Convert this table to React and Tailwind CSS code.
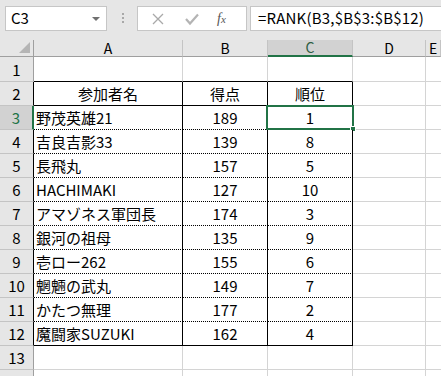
import React from 'react';

const rows = [
  ['野茂英雄21', '189', '1'],
  ['吉良吉影33', '139', '8'],
  ['長飛丸', '157', '5'],
  ['HACHIMAKI', '127', '10'],
  ['アマゾネス軍団長', '174', '3'],
  ['銀河の祖母', '135', '9'],
  ['壱ロー262', '155', '6'],
  ['魍魎の武丸', '149', '7'],
  ['かたつ無理', '177', '2'],
  ['魔闘家SUZUKI', '162', '4'],
];

const font = { fontFamily: '"Noto Sans CJK JP", "Liberation Sans", sans-serif' };

const Cell = ({ className = '', children }) => (
  <div className={`flex items-end pb-[1px] text-[15px] leading-[20px] text-black bg-white ${className}`}>
    {children}
  </div>
);

const RowHead = ({ n, selected, table, h }) => (
  <div
    className={`${h} flex items-end justify-center pb-[1px] text-[15px] leading-[20px] border-b border-[#c4c4c4] ${
      selected
        ? 'bg-[#d2d2d2] text-[#217346] border-r-2 border-r-[#217346]'
        : table
        ? 'bg-[#e6e6e6] text-black border-r border-r-black'
        : 'bg-[#e6e6e6] text-black border-r border-r-[#9f9f9f]'
    }`}
  >
    {n}
  </div>
);

const Blank = ({ h, last }) => (
  <Cell className={`${h} border-b border-[#d4d4d4] ${last ? '' : 'border-r'}`} />
);

export default function App() {
  return (
    <div className="w-[441px] h-[376px] overflow-hidden bg-[#e6e6e6] select-none" style={font}>
      {/* formula bar */}
      <div className="h-[40px] flex items-start pt-[6px]">
        <div className="ml-[5px] w-[102px] h-[25px] bg-white border border-[#c6c6c6] flex items-center pl-[5px] pr-[6px] justify-between">
          <span className="text-[15px] text-black">C3</span>
          <span className="w-0 h-0 border-l-[4px] border-r-[4px] border-t-[4px] border-l-transparent border-r-transparent border-t-[#707070]" />
        </div>
        <div className="ml-[15px] mt-[7px] flex flex-col gap-[2px]">
          <span className="w-[2px] h-[2px] bg-[#a8a8a8]" />
          <span className="w-[2px] h-[2px] bg-[#a8a8a8]" />
          <span className="w-[2px] h-[2px] bg-[#a8a8a8]" />
        </div>
        <div className="ml-[13px] w-[110px] h-[25px] bg-white border border-[#c6c6c6] flex items-center">
          <svg width="14" height="14" viewBox="0 0 14 14" className="ml-[13px]">
            <path d="M2 2 L12 12 M12 2 L2 12" stroke="#a9a9a9" strokeWidth="1.3" fill="none" />
          </svg>
          <svg width="16" height="14" viewBox="0 0 16 14" className="ml-[19px]">
            <path d="M2 7 L6 11.5 L14 2.5" stroke="#b4b4b4" strokeWidth="2.2" fill="none" />
          </svg>
          <span className="ml-[17px] text-[14px] italic text-[#555]" style={{ fontFamily: '"Liberation Serif", serif' }}>
            f<span className="text-[11px]">x</span>
          </span>
        </div>
        <div className="ml-[3px] flex-1 h-[25px] bg-white border border-[#c6c6c6] border-r-0 flex items-center pl-[7px]">
          <span className="text-[15px] text-black tracking-[0.2px]">=RANK(B3,$B$3:$B$12)</span>
        </div>
      </div>

      {/* sheet */}
      <div className="grid grid-cols-[34px_149px_85px_85px_73px_1fr]">
        {/* column headers */}
        <div className="h-[17px] bg-[#e6e6e6] border-r border-b border-[#9f9f9f] flex items-end justify-end pr-[3px] pb-[3px]">
          <svg width="11" height="11" viewBox="0 0 11 11">
            <path d="M11 0 L11 11 L0 11 Z" fill="#b5b5b5" />
          </svg>
        </div>
        {['A', 'B', 'C', 'D', 'E'].map((c) => (
          <div
            key={c}
            className={`h-[17px] flex items-end justify-center text-[14px] leading-[16px] border-r border-r-[#c4c4c4] ${
              c === 'C'
                ? 'bg-[#d2d2d2] text-[#2e5d43] border-b-2 border-b-[#217346]'
                : 'bg-[#e6e6e6] text-black border-b border-b-[#9f9f9f]'
            }`}
          >
            {c}
          </div>
        ))}

        {/* row 1 */}
        <RowHead n={1} h="h-[25px]" />
        <Cell className="h-[25px] border-r border-r-[#d4d4d4] border-b border-b-black" />
        <Cell className="h-[25px] border-r border-r-[#d4d4d4] border-b border-b-black" />
        <Cell className="h-[25px] border-r border-r-[#d4d4d4] border-b border-b-black" />
        <Blank h="h-[25px]" />
        <Blank h="h-[25px]" last />

        {/* row 2 header */}
        <RowHead n={2} table h="h-[24px]" />
        <Cell className="h-[24px] justify-center border-r border-b border-black">参加者名</Cell>
        <Cell className="h-[24px] justify-center border-r border-b border-black">得点</Cell>
        <Cell className="h-[24px] justify-center border-r border-b border-black">順位</Cell>
        <Blank h="h-[24px]" />
        <Blank h="h-[24px]" last />

        {rows.map(([name, score, rank], i) => {
          const last = i === rows.length - 1;
          const bottom = last
            ? 'border-b border-b-black'
            : 'border-b border-b-black [border-bottom-style:dotted]';
          return (
            <React.Fragment key={name}>
              <RowHead n={i + 3} table selected={i === 0} h="h-[24px]" />
              <Cell className={`h-[24px] pl-[2px] border-r border-r-black ${bottom}`}>{name}</Cell>
              <Cell className={`h-[24px] justify-center border-r border-r-black ${bottom}`}>{score}</Cell>
              <Cell className={`relative h-[24px] justify-center border-r border-r-black ${bottom}`}>
                {rank}
                {i === 0 && (
                  <>
                    <span className="absolute -left-[2px] -top-[1px] -right-[2px] -bottom-[1px] border-2 border-[#217346]" />
                    <span className="absolute -right-[4px] -bottom-[3px] w-[6px] h-[6px] bg-[#217346] border border-white" />
                  </>
                )}
              </Cell>
              <Blank h="h-[24px]" />
              <Blank h="h-[24px]" last />
            </React.Fragment>
          );
        })}

        {/* row 13 */}
        <RowHead n={13} h="h-[24px]" />
        <Blank h="h-[24px]" />
        <Blank h="h-[24px]" />
        <Blank h="h-[24px]" />
        <Blank h="h-[24px]" />
        <Blank h="h-[24px]" last />

        {/* row 14, mostly out of view */}
        <RowHead n="" h="h-[24px]" />
        <Blank h="h-[24px]" />
        <Blank h="h-[24px]" />
        <Blank h="h-[24px]" />
        <Blank h="h-[24px]" />
        <Blank h="h-[24px]" last />
      </div>
    </div>
  );
}
